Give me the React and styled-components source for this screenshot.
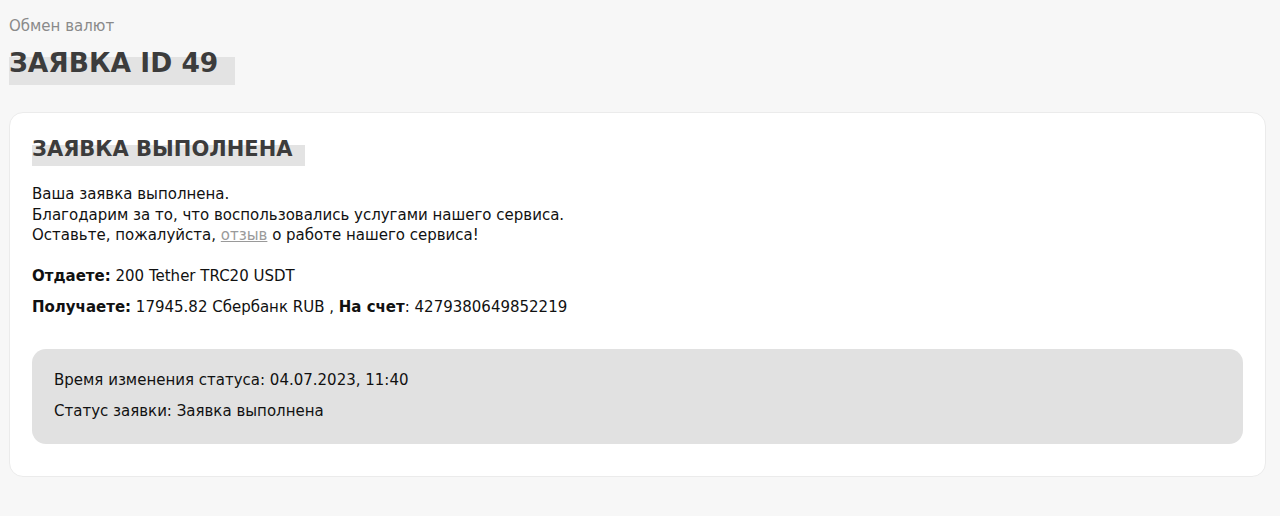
import React from 'react'
import styled, {createGlobalStyle} from 'styled-components'

const GlobalStyle = createGlobalStyle`
  html, body {
    margin: 0;
    padding: 0;
    background: #f7f7f7;
    font-family: 'DejaVu Sans', 'Open Sans', sans-serif;
    color: #111;
  }
`

const Page = styled.div`
  padding: 16px 14px 0 9px;
`

const Crumb = styled.div`
  font-size: 15px;
  color: #8a8a8a;
  line-height: 20px;
`

const Title = styled.h1`
  display: inline-block;
  margin: 10px 0 0;
  font-size: 26.5px;
  font-weight: 700;
  color: #3c3c3c;
  line-height: 34px;
  padding: 0 17px 6px 0;
  background: linear-gradient(#e3e3e3, #e3e3e3) no-repeat 0 11px / 100% 28px;
`

const Card = styled.div`
  margin-top: 26px;
  background: #fff;
  border: 1px solid #ebebeb;
  border-radius: 14px;
  padding: 22px 22px 32px 22px;
`

const CardTitle = styled.h2`
  display: inline-block;
  margin: 0;
  font-size: 21px;
  font-weight: 700;
  color: #3c3c3c;
  line-height: 28px;
  padding: 0 13px 4px 0;
  background: linear-gradient(#e3e3e3, #e3e3e3) no-repeat 0 10px / 100% 21px;
`

const Text = styled.p`
  margin: 17px 0 0;
  font-size: 15px;
  line-height: 20.5px;
`

const Link = styled.a`
  color: #9a9a9a;
  text-decoration: underline;
`

const Line = styled.div`
  font-size: 15px;
  line-height: 20px;
  margin-top: ${p => p.gap}px;
`

const StatusBox = styled.div`
  margin-top: 32px;
  background: #e1e1e1;
  border-radius: 14px;
  padding: 21px 22px 23px;
`

export default function App() {
  return (
    <>
      <GlobalStyle />
      <Page>
        <Crumb>Обмен валют</Crumb>
        <Title>ЗАЯВКА ID 49</Title>
        <Card>
          <CardTitle>ЗАЯВКА ВЫПОЛНЕНА</CardTitle>
          <Text>
            Ваша заявка выполнена.
            <br />
            Благодарим за то, что воспользовались услугами нашего сервиса.
            <br />
            Оставьте, пожалуйста, <Link href="#">отзыв</Link> о работе нашего сервиса!
          </Text>
          <Line gap={20}>
            <b>Отдаете:</b> 200 Tether TRC20 USDT
          </Line>
          <Line gap={11}>
            <b>Получаете:</b> 17945.82 Сбербанк RUB , <b>На счет</b>: 4279380649852219
          </Line>
          <StatusBox>
            <Line gap={0}>Время изменения статуса: 04.07.2023, 11:40</Line>
            <Line gap={11}>Статус заявки: Заявка выполнена</Line>
          </StatusBox>
        </Card>
      </Page>
    </>
  )
}
